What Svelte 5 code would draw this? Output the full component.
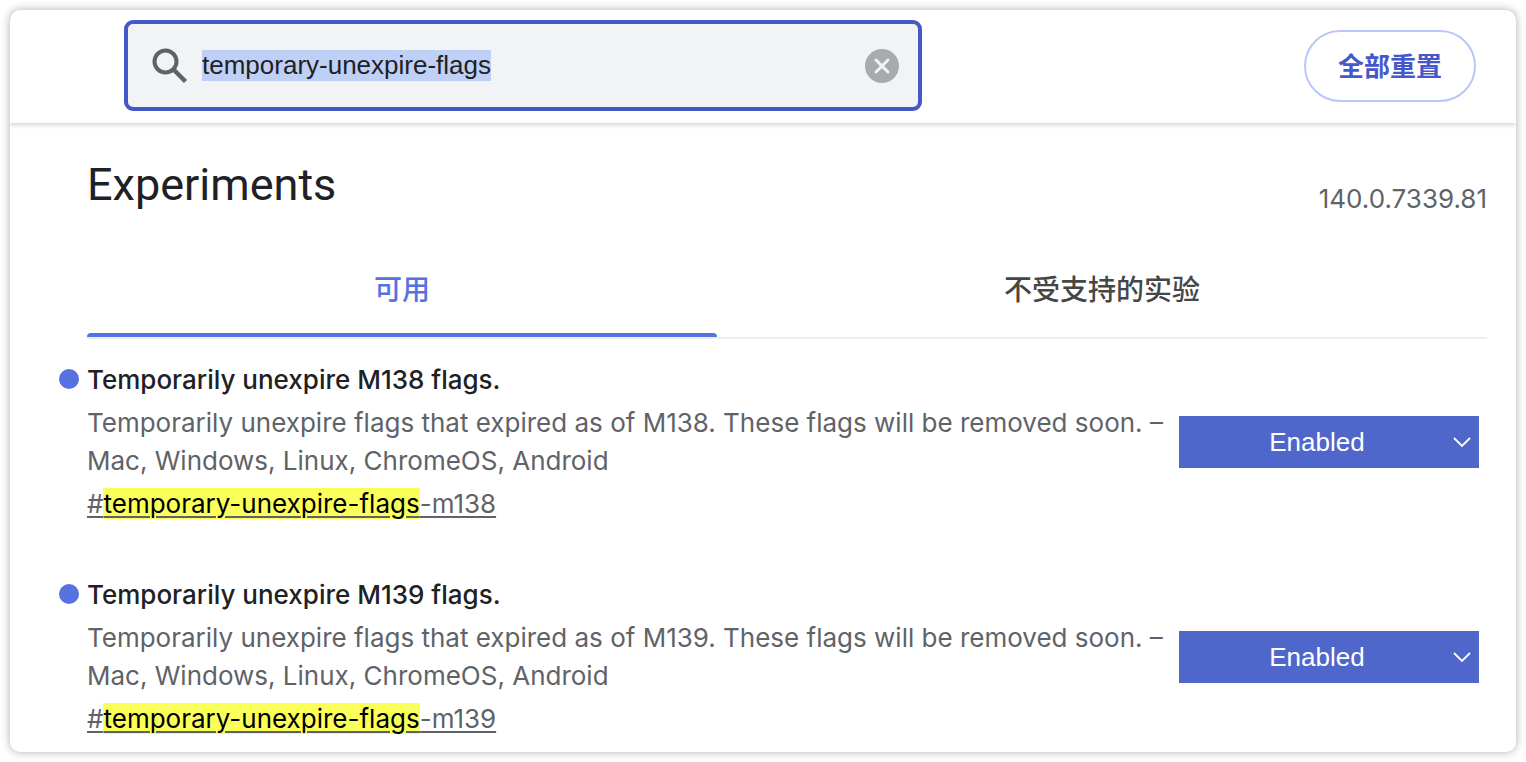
<script>
  import { onMount } from 'svelte';

  let query = $state('temporary-unexpire-flags');
  let field;

  const flags = $state([
    { milestone: 138, value: 'Enabled' },
    { milestone: 139, value: 'Enabled' }
  ]);

  onMount(() => {
    field.focus();
    field.select();
  });

  function clearSearch() {
    query = '';
    field.focus();
  }
</script>

<div class="window">
  <header>
    <div class="search">
      <svg class="lens" viewBox="0 0 36 36" aria-hidden="true">
        <circle cx="13.5" cy="13.5" r="11" fill="none" stroke="#5f6368" stroke-width="4" />
        <path d="M21.5 21.5 33.5 33.5" stroke="#5f6368" stroke-width="4.4" />
      </svg>
      <input type="text" aria-label="搜索标记" spellcheck="false" bind:value={query} bind:this={field} />
      <button class="clear" type="button" aria-label="清除搜索" onclick={clearSearch}>
        <svg viewBox="0 0 34 34" aria-hidden="true">
          <circle cx="17" cy="17" r="17" fill="#a9aaad" />
          <path d="M11 11l12 12M23 11l-12 12" stroke="#f1f3f4" stroke-width="3" stroke-linecap="round" />
        </svg>
      </button>
    </div>
    <button class="reset" type="button">全部重置</button>
  </header>

  <main>
    <div class="title">
      <h1>Experiments</h1>
      <span class="version">140.0.7339.81</span>
    </div>

    <div class="tabs" role="tablist">
      <button class="tab active" type="button" role="tab" aria-selected="true">可用</button>
      <button class="tab" type="button" role="tab" aria-selected="false">不受支持的实验</button>
    </div>

    {#each flags as flag}
      <section class="flag">
        <div class="text">
          <h2 id="name-{flag.milestone}">Temporarily unexpire M{flag.milestone} flags.</h2>
          <p>
            Temporarily unexpire flags that expired as of M{flag.milestone}. These flags will be removed soon. – Mac, Windows, Linux, ChromeOS, Android
          </p>
          <a href="#temporary-unexpire-flags-m{flag.milestone}">#<mark>temporary-unexpire-flags</mark>-m{flag.milestone}</a>
        </div>
        <div class="choice">
          <select aria-labelledby="name-{flag.milestone}" bind:value={flag.value}>
            <option>Default</option>
            <option>Enabled</option>
            <option>Disabled</option>
          </select>
          <svg viewBox="0 0 18 10" aria-hidden="true">
            <path d="M1 1l8 8 8-8" fill="none" stroke="#fff" stroke-width="1.8" />
          </svg>
        </div>
      </section>
    {/each}
  </main>
</div>

<style>
  :global(body) {
    margin: 0;
    background: #fff;
  }

  .window {
    margin: 10px;
    border-radius: 10px;
    background: #fff;
    box-shadow: 0 0 10px rgba(0, 0, 0, 0.32);
    color: #202124;
    font-family: Inter, 'Noto Sans CJK SC', sans-serif;
    font-size: 26px;
    line-height: 38px;
  }

  header {
    display: flex;
    align-items: center;
    justify-content: space-between;
    gap: 24px;
    box-sizing: border-box;
    height: 113px;
    padding: 0 40px 2px 114px;
    border-radius: 10px 10px 0 0;
    box-shadow: 0 2px 5px rgba(0, 0, 0, 0.18);
    clip-path: inset(0 0 -8px 0);
  }

  .search {
    display: flex;
    align-items: center;
    box-sizing: border-box;
    flex: 0 1 798px;
    min-width: 0;
    height: 91px;
    padding: 0 19px 0 24px;
    border: 4px solid #4558c9;
    border-radius: 9px;
    background: #f1f3f4;
  }

  .lens {
    width: 36px;
    height: 36px;
    margin-right: 14px;
    flex: none;
  }

  .search input {
    flex: 1;
    min-width: 0;
    height: 60px;
    padding: 0;
    border: 0;
    outline: 0;
    background: transparent;
    color: #202124;
    font-family: 'Liberation Sans', Arial, sans-serif;
    font-size: 26px;
  }

  .search input::selection {
    background: #bfd0f6;
    color: #202124;
  }

  .clear {
    width: 34px;
    height: 34px;
    padding: 0;
    border: 0;
    background: none;
  }

  .clear svg {
    display: block;
  }

  .reset {
    flex: none;
    height: 72px;
    padding: 0 32px 2px;
    border: 2px solid #b9c7f8;
    border-radius: 36px;
    background: #fff;
    color: #4558c9;
    font-family: 'Noto Sans CJK SC', sans-serif;
    font-size: 26px;
    font-weight: 700;
  }

  main {
    padding: 34px 29px 14px 77px;
  }

  .title {
    display: flex;
    align-items: flex-end;
    justify-content: space-between;
  }

  h1 {
    margin: 0;
    padding-bottom: 5px;
    font-family: Roboto, Inter, sans-serif;
    font-size: 45px;
    font-weight: 400;
    line-height: 56px;
  }

  .version {
    color: #5f6368;
  }

  .tabs {
    display: flex;
    margin-top: 20px;
    border-bottom: 2px solid #eee;
  }

  .tab {
    position: relative;
    flex: 1 1 auto;
    height: 99px;
    padding: 0;
    border: 0;
    background: none;
    color: #444746;
    font-family: 'Noto Sans CJK SC', sans-serif;
    font-size: 28px;
    font-weight: 500;
  }

  .tab.active {
    color: #5671e0;
  }

  .tab.active::after {
    content: '';
    position: absolute;
    inset: auto 0 0;
    height: 4px;
    border-radius: 4px 4px 0 0;
    background: #5671e0;
  }

  .flag {
    display: flex;
    align-items: center;
    justify-content: space-between;
    padding: 22px 8px 31px 0;
  }

  .flag:last-child {
    padding-bottom: 0;
  }

  .text {
    flex: 0 1 1084px;
  }

  h2 {
    position: relative;
    margin: 0;
    font-size: 26px;
    font-weight: 500;
    line-height: 38px;
  }

  h2::before {
    content: '';
    position: absolute;
    top: 8px;
    left: -28px;
    width: 20px;
    height: 20px;
    border-radius: 50%;
    background: #5671e0;
  }

  p {
    margin: 5px 0;
    color: #5f6368;
  }

  a {
    color: #5f6368;
    text-decoration-thickness: 2px;
    text-underline-offset: 3px;
  }

  mark {
    background: #faff5a;
    color: #000;
  }

  .choice {
    position: relative;
    flex: none;
  }

  select {
    display: block;
    width: 300px;
    height: 52px;
    padding: 0 24px 0 0;
    border: 0;
    border-radius: 0;
    appearance: none;
    background: #4f67cb;
    color: #fff;
    font-family: 'Liberation Sans', Arial, sans-serif;
    font-size: 26px;
    text-align: center;
    text-align-last: center;
  }

  .choice svg {
    position: absolute;
    top: 21px;
    right: 8px;
    width: 18px;
    height: 10px;
    pointer-events: none;
  }
</style>
